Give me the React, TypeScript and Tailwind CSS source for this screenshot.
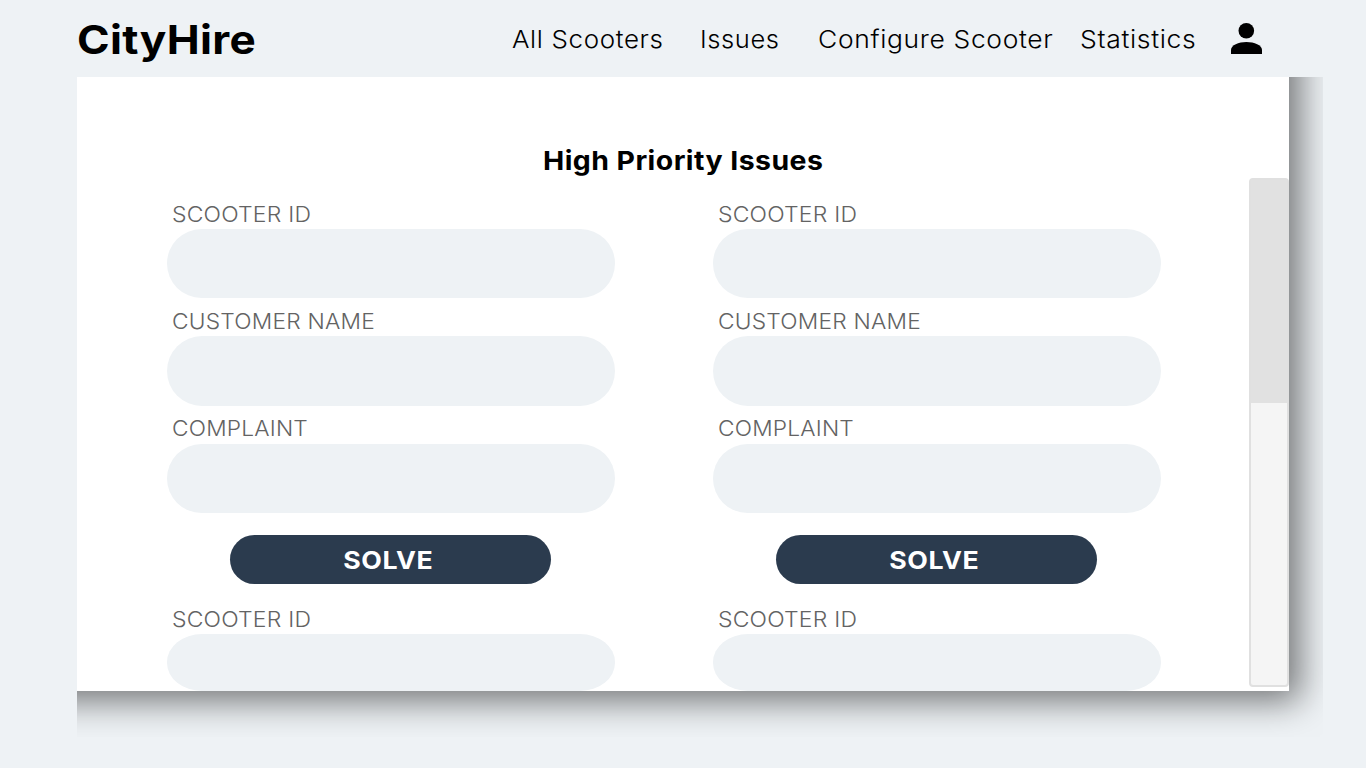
import React from "react";

const sans = "font-['Inter','Liberation_Sans',sans-serif]";

function Field({ label, stretch, short = false }: { label: string; stretch: string; short?: boolean }) {
  return (
    <div>
      <div className="flex h-[38px] items-center pt-[8.5px] pl-[5px] text-[21.5px] leading-none font-light tracking-[0.2px] whitespace-nowrap text-[#636363]">
        <span className={`inline-block origin-left ${stretch}`}>{label}</span>
      </div>
      <div className={short ? "h-[56.5px] rounded-[35px/28px] bg-[#eef2f5]" : "h-[69.4px] rounded-[35px] bg-[#eef2f5]"} />
    </div>
  );
}

function IssueColumn() {
  return (
    <section className="flex w-[448px] flex-col">
      <Field label="SCOOTER ID" stretch="scale-x-[1.067]" />
      <Field label="CUSTOMER NAME" stretch="scale-x-[1.058]" />
      <Field label="COMPLAINT" stretch="scale-x-[1.055]" />
      <button className="mt-[22px] mb-[12px] flex h-[49px] w-[321px] items-center justify-center self-center rounded-[25px] bg-[#2b3b4e] pt-px pr-[4px] text-[24.5px] leading-none font-bold tracking-[0.5px] text-white">
        <span className="inline-block scale-x-[1.09]">SOLVE</span>
      </button>
      <Field label="SCOOTER ID" stretch="scale-x-[1.067]" short />
    </section>
  );
}

export default function App() {
  return (
    <div className={`flex h-[768px] w-[1366px] flex-col overflow-hidden bg-[#eef2f5] ${sans}`}>
      <header className="flex h-[77px] shrink-0 items-center pl-[77px] text-black">
        <h1 className="w-[435px] pt-[5px] text-[39.5px] leading-none font-bold tracking-[0.3px]">
          <span className="inline-block origin-left scale-x-[1.117]">CityHire</span>
        </h1>
        <nav className="flex items-center pt-[2px] text-[24.5px] leading-none font-light tracking-[0.6px] whitespace-nowrap">
          <a className="w-[188px]">
            <span className="inline-block origin-left scale-x-[1.06]">All Scooters</span>
          </a>
          <a className="w-[118px]">
            <span className="inline-block origin-left scale-x-[1.04]">Issues</span>
          </a>
          <a className="w-[262px]">
            <span className="inline-block origin-left scale-x-[1.079]">Configure Scooter</span>
          </a>
          <a className="w-[151px]">
            <span className="inline-block origin-left scale-x-[1.084]">Statistics</span>
          </a>
        </nav>
        <svg className="h-[31px] w-[31px]" viewBox="0 0 31 31" fill="currentColor">
          <circle cx="15.3" cy="7.8" r="7.8" />
          <path d="M0 31v-4c0-5 7.5-8.1 15.4-8.1S31 22 31 27v4z" />
        </svg>
      </header>

      <div className="ml-[77px] h-[660px] w-[1246px] overflow-hidden">
        <main className="-mt-20 -ml-20 flex h-[694px] w-[1292px] bg-white pt-20 pl-20 shadow-[11px_10px_33px_rgba(0,0,0,0.52)]">
          <div className="flex w-[1172px] flex-col">
            <h2 className="flex h-[114px] items-center justify-center pt-[53px] pl-[40px] text-[26px] leading-none font-bold tracking-[0.4px] text-black">
              <span className="inline-block scale-x-[1.094]">High Priority Issues</span>
            </h2>
            <div className="flex gap-[98px] pl-[89.7px]">
              <IssueColumn />
              <IssueColumn />
            </div>
          </div>
          <div className="mt-[101px] h-[509px] w-[40px] rounded-[4px] border-2 border-[#e0e0e0] bg-[#f5f5f5]">
            <div className="h-[223px] bg-[#e1e1e1]" />
          </div>
        </main>
      </div>
    </div>
  );
}
